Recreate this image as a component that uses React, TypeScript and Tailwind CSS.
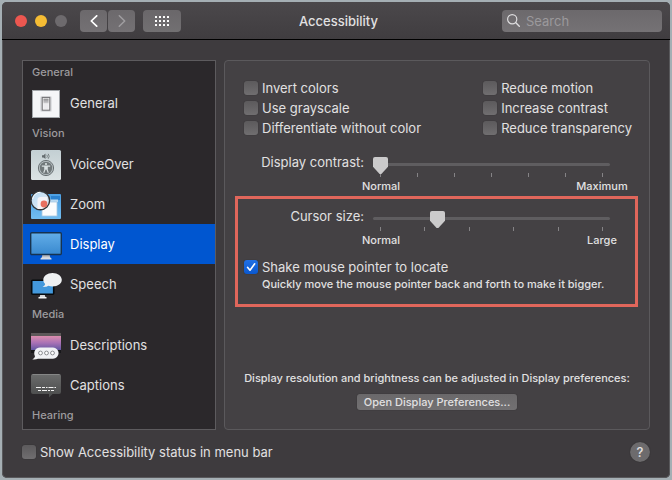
import { useState } from 'react';
import type { ReactNode } from 'react';

// --- Sidebar icons ---
const GeneralIcon = () => (
  <svg viewBox="0 0 32 32" className="size-8" aria-hidden="true">
    <defs>
      <linearGradient id="switch" x1="0" y1="0" x2="0" y2="1">
        <stop offset="0" stopColor="#8d8d90" />
        <stop offset="1" stopColor="#d2d2d4" />
      </linearGradient>
    </defs>
    <rect x="2.5" y="3.5" width="27" height="27" fill="#f5f6f8" stroke="#a3a7ab" />
    <rect x="10" y="9" width="12" height="16" rx="2" fill="#dfe1e4" />
    <rect x="12.2" y="10.4" width="7.600" height="12.800" fill="#fafafa" stroke="#747477" strokeWidth="1.1" />
    <rect x="13.4" y="11.6" width="5.200" height="5" fill="url(#switch)" />
    <rect x="13.4" y="16.6" width="5.200" height="5.400" fill="#ececee" />
  </svg>
);

const VoiceOverIcon = () => (
  <svg viewBox="0 0 32 32" className="size-8" aria-hidden="true">
    <defs>
      <linearGradient id="voice" x1="0" y1="0" x2="0" y2="1">
        <stop offset="0" stopColor="#c3cfd3" />
        <stop offset="1" stopColor="#dce3e4" />
      </linearGradient>
    </defs>
    <rect x="1" y="2" width="30" height="30" rx="1.5" fill="url(#voice)" />
    <path d="M12 7.200h1.500l2-1.600V11l-2-1.600H12z" fill="#646c6f" />
    <path d="M16.800 6.800a2.400 2.400 0 0 1 0 3M18.200 5.800a4 4 0 0 1 0 5" fill="none" stroke="#646c6f" strokeWidth=".8" />
    <circle cx="16" cy="20" r="7.600" fill="#b7c0c3" stroke="#6a7174" strokeWidth="1" />
    <circle cx="16" cy="20" r="6.200" fill="#71787a" />
    <circle cx="16" cy="16" r="1.100" fill="#d9e0e1" />
    <path d="M11.800 18.100h8.400M15 18.500v3l-1.300 3.200M17 18.500v3l1.300 3.200" fill="none" stroke="#d9e0e1" strokeWidth="1.200" />
    <path d="M14.500 18h3v3.500h-3z" fill="#d9e0e1" />
  </svg>
);

const ZoomIcon = () => (
  <svg viewBox="0 0 32 32" className="size-8" aria-hidden="true">
    <defs>
      <linearGradient id="zoomBack" x1="0" y1="0" x2="0" y2="1">
        <stop offset="0" stopColor="#4c9fe2" />
        <stop offset="1" stopColor="#72bdf0" />
      </linearGradient>
      <linearGradient id="lens" x1="0" y1="0" x2="1" y2="1">
        <stop offset="0" stopColor="#b5d8f2" />
        <stop offset="1" stopColor="#e8eff6" />
      </linearGradient>
    </defs>
    <rect x="1" y="6" width="30" height="25" rx="1" fill="url(#zoomBack)" />
    <path d="M21 8h9v4h-9z" fill="#2c82cf" />
    <rect x="15" y="11.5" width="13" height="2.5" fill="#b9d9f1" />
    <rect x="12" y="14" width="15" height="14" fill="#fbfcfd" stroke="#a8c9e2" strokeWidth=".8" />
    <circle cx="10.300" cy="12.500" r="9.300" fill="url(#lens)" stroke="#343638" strokeWidth="1.400" />
    <path d="M7.500 12c0-2 1-3 3-3h6.500v8l-5 4H7.500z" fill="#f4f3f7" />
    <circle cx="14" cy="16" r="3.400" fill="#e8705f" />
    <path d="M2.600 11a7.800 7.800 0 0 1 7.700-6.800" fill="none" stroke="#fff" strokeWidth="1" />
  </svg>
);

const DisplayIcon = () => (
  <svg viewBox="0 0 32 32" className="size-8" aria-hidden="true">
    <defs>
      <linearGradient id="screen" x1="0" y1="0" x2="0" y2="1">
        <stop offset="0" stopColor="#63aee8" />
        <stop offset="1" stopColor="#3989cf" />
      </linearGradient>
    </defs>
    <path d="M12.500 26h7l.7 4h-8.400z" fill="#b9bcc3" />
    <path d="M10.500 30.500l1.500-1.300h8l1.500 1.300v1h-11z" fill="#dadde3" />
    <rect x=".7" y="4.700" width="30.600" height="21.800" rx="1" fill="url(#screen)" stroke="#17334f" strokeWidth="1.400" />
  </svg>
);

const SpeechIcon = () => (
  <svg viewBox="0 0 32 32" className="size-8" aria-hidden="true">
    <path d="M10.500 26h4l1 3.500h-6z" fill="#d7d9dc" />
    <rect x="8.500" y="29" width="8" height="1.500" fill="#f1f2f3" />
    <rect x="1.700" y="12.200" width="22" height="14" rx="1" fill="#4398dc" stroke="#070a0d" strokeWidth="1.600" />
    <path d="M22.500 5c5.400 0 9.300 3 9.300 6.800s-3.900 6.700-9.300 6.700c-1.500 0-2.900-.2-4.100-.7-1.600 1-3.600 1.300-5.900 1.100 1.400-.8 2.300-1.700 2.700-3-1.300-1.100-1.900-2.500-1.900-4.100 0-3.800 3.900-6.800 9.200-6.800z" fill="#eff1f3" />
  </svg>
);

const DescriptionsIcon = () => (
  <svg viewBox="0 0 32 32" className="size-8" aria-hidden="true">
    <defs>
      <linearGradient id="sunset" x1="0" y1="0" x2="0" y2="1">
        <stop offset="0" stopColor="#dc8eae" />
        <stop offset=".5" stopColor="#a871b5" />
        <stop offset="1" stopColor="#6258a2" />
      </linearGradient>
    </defs>
    <rect x="1" y="4" width="30" height="20" fill="#17171a" />
    <rect x="1" y="4" width="30" height="3" fill="#5d5859" />
    <rect x="1" y="7" width="30" height="14" fill="url(#sunset)" />
    <path d="M10 18.500h13a5.600 5.600 0 0 1 0 11.200H8c-1.700.7-3.500 1-5.700.6 1.500-.8 2.400-1.600 2.700-3-2.200-4.500.8-8.800 5-8.800z" fill="#f0f1f4" />
    <g fill="#fff" stroke="#8b8d91" strokeWidth="1">
      <circle cx="10.500" cy="24" r="1.900" />
      <circle cx="16.500" cy="24" r="1.900" />
      <circle cx="22.500" cy="24" r="1.900" />
    </g>
  </svg>
);

const CaptionsIcon = () => (
  <svg viewBox="0 0 32 32" className="size-8" aria-hidden="true">
    <defs>
      <linearGradient id="caption" x1="0" y1="0" x2="0" y2="1">
        <stop offset="0" stopColor="#6b6c6c" />
        <stop offset="1" stopColor="#494a4a" />
      </linearGradient>
    </defs>
    <path d="M3 5h26a2 2 0 0 1 2 2v16a2 2 0 0 1-2 2h-6.500l-3.500 3.500V25H3a2 2 0 0 1-2-2V7a2 2 0 0 1 2-2z" fill="url(#caption)" />
    <path d="M2.500 5.500h27" stroke="#858686" strokeWidth="1" />
    <path d="M6 18.500h20" stroke="#f2f2f2" strokeWidth="1.200" strokeDasharray="5 1 3 1 1.500 1" />
    <path d="M8 21.500h16" stroke="#f2f2f2" strokeWidth="1.200" strokeDasharray="3 1 5 1 2 1" />
  </svg>
);

const sections = [
  { title: 'General', items: [{ name: 'General', Icon: GeneralIcon }] },
  {
    title: 'Vision',
    items: [
      { name: 'VoiceOver', Icon: VoiceOverIcon },
      { name: 'Zoom', Icon: ZoomIcon },
      { name: 'Display', Icon: DisplayIcon },
      { name: 'Speech', Icon: SpeechIcon },
    ],
  },
  {
    title: 'Media',
    items: [
      { name: 'Descriptions', Icon: DescriptionsIcon },
      { name: 'Captions', Icon: CaptionsIcon },
    ],
  },
  { title: 'Hearing', items: [] },
];

// --- Controls ---
const Checkbox = ({ children, defaultChecked = false }: { children: ReactNode; defaultChecked?: boolean }) => (
  <label className="flex h-5 items-center gap-1 text-[13px] leading-5 whitespace-nowrap">
    <span className="grid size-3.5 shrink-0">
      <input
        type="checkbox"
        defaultChecked={defaultChecked}
        className="peer col-start-1 row-start-1 size-3.5 appearance-none rounded-[3px] bg-linear-to-b from-[#5c5a5c] to-[#706e70] shadow-[0_0_1px_#222] checked:from-[#2170e4] checked:to-[#0a58d0]"
      />
      <svg
        viewBox="0 0 14 14"
        className="pointer-events-none invisible col-start-1 row-start-1 size-3.5 peer-checked:visible"
        aria-hidden="true"
      >
        <path d="M3.500 7.300l2.500 2.900 4.700-6.400" fill="none" stroke="#fff" strokeWidth="1.600" strokeLinecap="round" strokeLinejoin="round" />
      </svg>
    </span>
    {children}
  </label>
);

type SliderProps = { id: string; label: string; value: number; ticks: number; min: string; max: string };

const Slider = ({ id, label, value, ticks, min, max }: SliderProps) => (
  <div className="flex items-start gap-[9px]">
    <label htmlFor={id} className="w-[120px] text-right text-[13px] leading-5 whitespace-nowrap">
      {label}
    </label>
    <div className="min-w-0 flex-1 pt-[5px]">
      <input
        id={id}
        type="range"
        min={0}
        max={222}
        defaultValue={value}
        className="block h-[15px] w-full appearance-none bg-transparent [&::-webkit-slider-runnable-track]:h-[3px] [&::-webkit-slider-runnable-track]:rounded-sm [&::-webkit-slider-runnable-track]:bg-[#5f5d60] [&::-webkit-slider-thumb]:-mt-1.5 [&::-webkit-slider-thumb]:h-[17px] [&::-webkit-slider-thumb]:w-[15px] [&::-webkit-slider-thumb]:appearance-none [&::-webkit-slider-thumb]:rounded-[2px] [&::-webkit-slider-thumb]:bg-[#cbcacb] [&::-webkit-slider-thumb]:[clip-path:polygon(0_0,100%_0,100%_58%,56%_100%,44%_100%,0_58%)]"
      />
      <div className="mt-px flex justify-between px-[7px]">
        {Array.from({ length: ticks }, (_, i) => (
          <span key={i} className="h-1 w-px bg-[#858386]" />
        ))}
      </div>
      <div className="-mx-[22px] mt-px flex justify-between text-center text-[11px] leading-4 font-medium">
        <span className="w-15">{min}</span>
        <span className="w-15">{max}</span>
      </div>
    </div>
  </div>
);

// --- Window ---
const TitleBar = () => (
  <header className="grid h-[38px] grid-cols-[1fr_auto_1fr] items-center border-b border-black bg-linear-to-b from-[#4b484b] to-[#403d40] pr-2 pl-[13px]">
    <div className="flex items-center">
      <div className="flex gap-2">
        <button aria-label="Close" className="size-3 rounded-full bg-[#ec5750]" />
        <button aria-label="Minimize" className="size-3 rounded-full bg-[#f5bc34]" />
        <button aria-label="Zoom" className="size-3 rounded-full bg-[#6d6a6d]" />
      </div>
      <div className="ml-[13px] flex gap-px">
        <button aria-label="Back" className="flex h-[22px] w-[27px] items-center justify-center rounded-[4px] bg-linear-to-b from-[#6c696c] to-[#747174]">
          <svg viewBox="0 0 8 12" className="h-3 w-2" aria-hidden="true">
            <path d="M6.700 .8L1.300 6l5.400 5.200" fill="none" stroke="#fff" strokeWidth="1.700" strokeLinecap="round" strokeLinejoin="round" />
          </svg>
        </button>
        <button aria-label="Forward" className="flex h-[22px] w-[27px] items-center justify-center rounded-[4px] bg-linear-to-b from-[#6c696c] to-[#747174]">
          <svg viewBox="0 0 8 12" className="h-3 w-2" aria-hidden="true">
            <path d="M1.300 .8L6.700 6l-5.400 5.200" fill="none" stroke="#a09ea1" strokeWidth="1.500" strokeLinecap="round" strokeLinejoin="round" />
          </svg>
        </button>
      </div>
      <button aria-label="Show all" className="ml-2 flex h-[22px] w-[38px] items-center justify-center rounded-[4px] bg-linear-to-b from-[#6a676a] to-[#727072]">
        <svg viewBox="0 0 14 10" className="h-2.5 w-3.5" fill="#fff" aria-hidden="true">
          {[0, 4, 8].map((y) =>
            [0, 4, 8, 12].map((x) => <rect key={`${x}-${y}`} x={x} y={y} width="2" height="2" rx=".3" />),
          )}
        </svg>
      </button>
    </div>
    <h1 className="text-[13px] leading-5 font-medium">Accessibility</h1>
    <label className="flex h-[22px] w-40 items-center gap-1.5 justify-self-end rounded-[4px] bg-linear-to-b from-[#6c696c] to-[#757275] pl-[5px]">
      <svg viewBox="0 0 13 13" className="size-[13px] shrink-0" aria-hidden="true">
        <circle cx="5.200" cy="5.200" r="4.600" fill="none" stroke="#dedddf" strokeWidth="1.200" />
        <path d="M8.600 8.600l3.700 3.700" stroke="#dedddf" strokeWidth="1.400" strokeLinecap="round" />
      </svg>
      <input
        type="search"
        aria-label="Search"
        placeholder="Search"
        className="w-full min-w-0 bg-transparent text-[13px] leading-5 outline-none placeholder:text-[#9b999c]"
      />
    </label>
  </header>
);

export default function App() {
  const [selected, setSelected] = useState('Display');

  return (
    <div className="flex min-h-screen flex-col bg-[#a5afb4] p-0.5 font-[Inter,sans-serif] text-[#e1e0e1]">
      <div className="flex flex-1 flex-col overflow-hidden rounded-[5px] bg-[#3e3b3e] shadow-[inset_0_0_0_1px_#59595c]">
        <TitleBar />

        <main className="flex flex-1 gap-2 px-5 pt-5">
          {/* Categories */}
          <nav className="w-[194px] shrink-0 border border-[#5d5b5e] bg-[#2b282b] pt-px">
            {sections.map(({ title, items }) => (
              <section key={title}>
                <h2 className="h-[21px] pl-[9px] text-[11px] leading-5 font-medium text-[#9d9b9e]">{title}</h2>
                {items.map(({ name, Icon }) => (
                  <button
                    key={name}
                    onClick={() => setSelected(name)}
                    className={`flex h-10 w-full items-center gap-2 pl-[7px] text-left text-[13px] leading-5 ${
                      selected === name ? 'bg-[#0056d0] text-white' : ''
                    }`}
                  >
                    <Icon />
                    {name}
                  </button>
                ))}
              </section>
            ))}
          </nav>

          {/* Display settings */}
          <section className="flex min-w-0 flex-1 flex-col rounded-[4px] border border-[#5b595c] bg-[#444144] pt-[17px] pb-[19px]">
            <div className="grid grid-cols-[1fr_auto] pr-[17px] pl-[19px]">
              <Checkbox>Invert colors</Checkbox>
              <Checkbox>Reduce motion</Checkbox>
              <Checkbox>Use grayscale</Checkbox>
              <Checkbox>Increase contrast</Checkbox>
              <Checkbox>Differentiate without color</Checkbox>
              <Checkbox>Reduce transparency</Checkbox>
            </div>

            <div className="mt-3.5 pr-[39px] pl-[19px]">
              <Slider id="contrast" label="Display contrast:" value={0} ticks={7} min="Normal" max="Maximum" />
            </div>

            <div className="mt-0.5 mr-[11px] ml-2.5 border-3 border-[#e0665b] pt-[7px] pr-[25px] pb-[13px] pl-1.5">
              <Slider id="cursor" label="Cursor size:" value={57} ticks={6} min="Normal" max="Large" />
              <div className="mt-[9px]">
                <Checkbox defaultChecked>Shake mouse pointer to locate</Checkbox>
                <p className="pl-[18px] text-[11px] leading-[14px] font-medium whitespace-nowrap">
                  Quickly move the mouse pointer back and forth to make it bigger.
                </p>
              </div>
            </div>

            <div className="mt-auto flex flex-col items-center gap-2 text-[11px] leading-4 font-medium">
              <p>Display resolution and brightness can be adjusted in Display preferences:</p>
              <button className="h-4 rounded-[3px] bg-linear-to-b from-[#6a686a] to-[#727072] px-[7px] shadow-[0_0_1px_#222]">
                Open Display Preferences...
              </button>
            </div>
          </section>
        </main>

        <footer className="flex h-12 items-center justify-between px-5 pb-1">
          <Checkbox>Show Accessibility status in menu bar</Checkbox>
          <button aria-label="Help" className="size-5 rounded-full bg-[#6d6b6d] text-[13px] leading-5 font-medium shadow-[0_0_1px_#222]">
            ?
          </button>
        </footer>
      </div>
    </div>
  );
}
